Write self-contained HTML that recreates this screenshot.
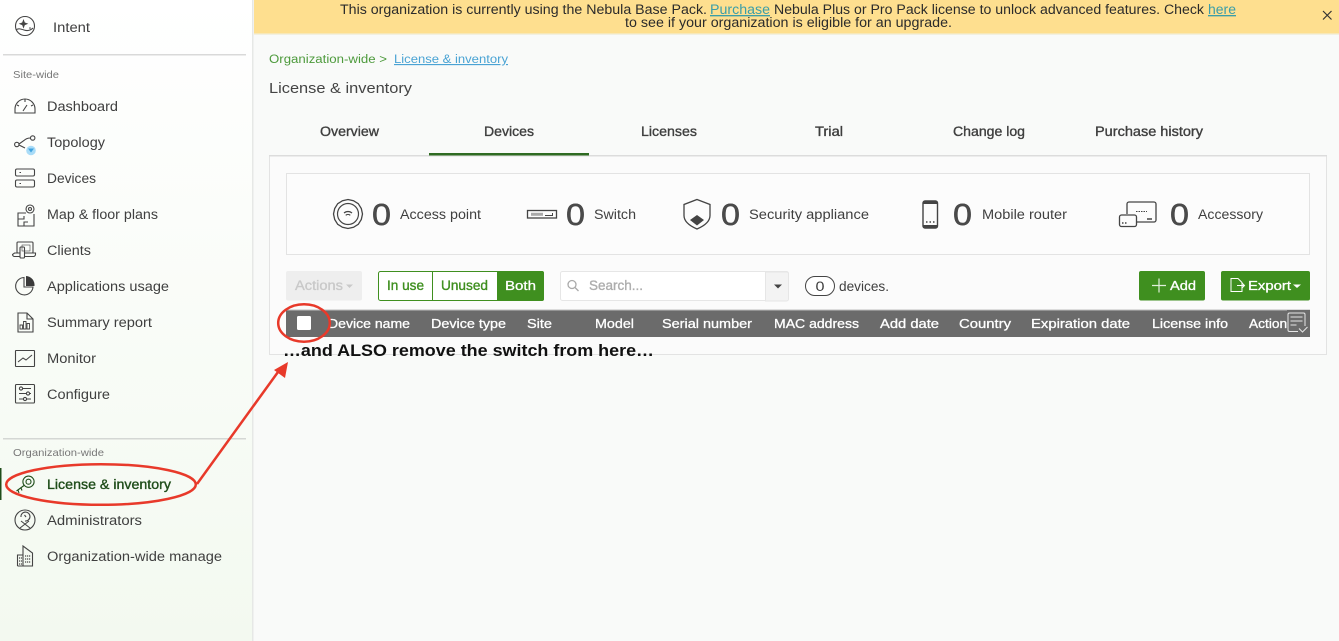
<!DOCTYPE html>
<html><head><meta charset="utf-8"><title>License &amp; inventory</title>
<style>
html,body{margin:0;padding:0;width:1339px;height:641px;overflow:hidden;background:#f9faf9}
svg{display:block}
text{font-family:"Liberation Sans",sans-serif;white-space:pre}
.n{font-size:13.5px;fill:#3f3f3f}
.m{font-size:13.5px;fill:#3f3f3f;stroke:#3f3f3f;stroke-width:.35}
.h{font-size:13px;fill:#fff;stroke:#fff;stroke-width:.3}
.s{font-size:10.5px;fill:#777}
.z{font-size:31px;fill:#4a4a4a;stroke:#4a4a4a;stroke-width:.5}
.i{fill:none;stroke:#444;stroke-width:1.1}
</style></head><body>
<svg width="1339" height="641" viewBox="0 0 1339 641" xmlns="http://www.w3.org/2000/svg">
<defs><linearGradient id="g" x1="0" y1="0" x2="0" y2="1"><stop offset="0" stop-color="#fff"/><stop offset="1" stop-color="#f3f9f0"/></linearGradient></defs>
<rect width="1339" height="641" fill="#f9faf9"/>
<!-- sidebar -->
<rect width="252" height="641" fill="url(#g)"/>
<rect x="252" width="1.5" height="641" fill="#e6e8e6"/>
<rect x="3" y="54" width="243" height="1.5" fill="#d9d9d9"/>
<rect x="3" y="438" width="243" height="1.5" fill="#d4d7d4"/>
<rect y="468" width="1.5" height="32" fill="#1f4d1a"/>
<text class="n" x="53" y="32" textLength="37" lengthAdjust="spacingAndGlyphs">Intent</text>
<text class="s" x="13" y="78" textLength="46" lengthAdjust="spacingAndGlyphs">Site-wide</text>
<text class="n" x="47" y="111" textLength="71" lengthAdjust="spacingAndGlyphs">Dashboard</text>
<text class="n" x="47" y="147" textLength="58" lengthAdjust="spacingAndGlyphs">Topology</text>
<text class="n" x="47" y="183" textLength="49" lengthAdjust="spacingAndGlyphs">Devices</text>
<text class="n" x="47" y="219" textLength="111" lengthAdjust="spacingAndGlyphs">Map &amp; floor plans</text>
<text class="n" x="47" y="255" textLength="44" lengthAdjust="spacingAndGlyphs">Clients</text>
<text class="n" x="47" y="291" textLength="122" lengthAdjust="spacingAndGlyphs">Applications usage</text>
<text class="n" x="47" y="327" textLength="105" lengthAdjust="spacingAndGlyphs">Summary report</text>
<text class="n" x="47" y="363" textLength="49" lengthAdjust="spacingAndGlyphs">Monitor</text>
<text class="n" x="47" y="399" textLength="63" lengthAdjust="spacingAndGlyphs">Configure</text>
<text class="s" x="13" y="456" textLength="91" lengthAdjust="spacingAndGlyphs">Organization-wide</text>
<text class="m" x="47" y="489" textLength="124" lengthAdjust="spacingAndGlyphs" style="fill:#1f4d1a;stroke:#1f4d1a">License &amp; inventory</text>
<text class="n" x="47" y="525" textLength="95" lengthAdjust="spacingAndGlyphs">Administrators</text>
<text class="n" x="47" y="561" textLength="175" lengthAdjust="spacingAndGlyphs">Organization-wide manage</text>
<!-- sidebar icons -->
<g class="i">
<circle cx="25" cy="26" r="9.5"/><path d="M16 30c2-2 5-1 8 0s6 1 9-2"/>
<path d="M15 113v-4a10 10 0 0 1 20 0v4z"/><path d="M25 99v3M17 105l2 1M33 105l-2 1M23 111l4-6"/>
<circle cx="16.800" cy="144.500" r="2.200"/><circle cx="32.700" cy="138" r="2.200"/><path d="M19 144l5-3.500c2-2 4-2.500 6.500-2.500M19 145l6 3"/>
<rect x="15.500" y="169" width="19" height="7" rx="1.500"/><rect x="15.500" y="180" width="19" height="7" rx="1.500"/><path d="M19.500 172.500h1.500M19.500 183.500h1.500"/>
<path d="M26 213h-8v13h16v-12M18 219h6v-3M24 226v-4h4"/><circle cx="30" cy="209" r="4"/><circle cx="30" cy="209" r="1.500"/>
<rect x="17" y="242" width="16" height="11" rx="1"/><path d="M14.500 253h21v1.500c0 1-1 2-2 2h-19c-1 0-2-1-2-2z"/><rect x="20" y="247" width="4.500" height="11" rx="1" fill="#fafbf9"/><rect x="22" y="245" width="8" height="6" stroke-width=".6"/>
<path d="M33 287a8.700 8.700 0 1 1-9-9.500V287z"/>
<path d="M18 313h9l6 6v13H18zM27 313v6h6"/>
<path d="M20 329v-4h2.500v4zM23.500 329v-7.500H26v7.500zM27 329v-5.500h2.500v5.500z" stroke-width=".9"/>
<rect x="15.500" y="350.500" width="19" height="16" rx=".5"/><path d="M18 362l5-4 3 2 6-5"/>
<rect x="15.500" y="384.500" width="19" height="18.500" rx="1"/><path d="M19 388.500h12M19 393.500h12M19 399h12"/>
<circle cx="21" cy="388.500" r="1.600" fill="#fbfcfa"/><circle cx="28" cy="393.500" r="1.600" fill="#fbfcfa"/><circle cx="25" cy="399" r="1.600" fill="#fbfcfa"/>
<g stroke="#1f4d1a"><circle cx="28.500" cy="481.700" r="5.600"/><circle cx="28.500" cy="481.700" r="2.500"/><path d="M24 485.500l-7.500 5.500M18 490l1 3M21 488l1 2.500"/></g>
<circle cx="25" cy="520" r="10"/><path d="M21 517a4.500 4.500 0 1 1 4 4M20 528l9-7M30 528l-9-7M24.500 515l1.500 2"/>
<path d="M23 566v-20l9.500 7v13zM17.500 566v-11H23M17.500 566h15"/><path d="M19 558h3M19 561h3M19 564h3M25 556h6M25 559h6M25 562h6" stroke-width="1.200" stroke-dasharray="1.200 .8"/>
</g>
<path d="M23.500 19l1.300 3.500 3.500 1.300-3.500 1.300-1.300 3.500-1.300-3.500-3.500-1.300 3.500-1.300z" fill="#444"/>
<circle cx="30" cy="28" r=".8" fill="#444"/>
<path d="M26 276v10h8.500a9 9 0 0 0-8.500-10z" fill="#3a3a3a"/>
<circle cx="31" cy="150.500" r="4.800" fill="#a9dcf7"/><path d="M28 148.500h6l-3 4z" fill="#3fa4e0"/>
<!-- banner -->
<rect x="254" width="1085" height="33.500" fill="#fedf8f"/>
<rect x="254" y="33.500" width="1085" height="1.500" fill="#f2f0e0"/>
<text x="340" y="14" font-size="13.500" fill="#2b2b2b" textLength="367" lengthAdjust="spacingAndGlyphs">This organization is currently using the Nebula Base Pack.</text>
<text x="710" y="14" font-size="13.500" fill="#3b9ea8" text-decoration="underline" textLength="60" lengthAdjust="spacingAndGlyphs">Purchase</text>
<text x="774" y="14" font-size="13.500" fill="#2b2b2b" textLength="430" lengthAdjust="spacingAndGlyphs">Nebula Plus or Pro Pack license to unlock advanced features. Check</text>
<text x="1208" y="14" font-size="13.500" fill="#3b9ea8" text-decoration="underline" textLength="28" lengthAdjust="spacingAndGlyphs">here</text>
<text x="625" y="27" font-size="13.500" fill="#2b2b2b" textLength="327" lengthAdjust="spacingAndGlyphs">to see if your organization is eligible for an upgrade.</text>
<path d="M1323 11l8.500 8.500M1331.500 11l-8.500 8.500" stroke="#333" stroke-width="1.200" fill="none"/>
<!-- heading -->
<text x="269" y="63" font-size="11.500" fill="#4d9a3c" textLength="118" lengthAdjust="spacingAndGlyphs">Organization-wide &gt;</text>
<text x="394" y="63" font-size="11.500" fill="#4aa3d4" text-decoration="underline" textLength="114" lengthAdjust="spacingAndGlyphs">License &amp; inventory</text>
<text x="269" y="93" font-size="15px" fill="#444" textLength="143" lengthAdjust="spacingAndGlyphs">License &amp; inventory</text>
<!-- tabs -->
<text class="m" x="320" y="136" textLength="59" lengthAdjust="spacingAndGlyphs">Overview</text>
<text class="m" x="484" y="136" textLength="50" lengthAdjust="spacingAndGlyphs">Devices</text>
<text class="m" x="641" y="136" textLength="56" lengthAdjust="spacingAndGlyphs">Licenses</text>
<text class="m" x="815" y="136" textLength="28" lengthAdjust="spacingAndGlyphs">Trial</text>
<text class="m" x="953" y="136" textLength="72" lengthAdjust="spacingAndGlyphs">Change log</text>
<text class="m" x="1095" y="136" textLength="108" lengthAdjust="spacingAndGlyphs">Purchase history</text>
<!-- panel -->
<rect x="269.500" y="155.500" width="1057" height="199" fill="#fbfbfb" stroke="#e3e3e3"/>
<rect x="269" y="155" width="1058" height="1.500" fill="#dcdcdc"/>
<rect x="429" y="153" width="160" height="2.500" fill="#2f6b22"/>
<rect x="286.500" y="173.500" width="1023" height="81" fill="#fcfcfc" stroke="#e3e3e3"/>
<!-- summary -->
<g class="i">
<path d="M348 199.500l5.500 1.200 4.800 3 3 4.800 1.200 5.500-1.200 5.500-3 4.800-4.800 3-5.500 1.200-5.500-1.200-4.800-3-3-4.800-1.200-5.500 1.200-5.500 3-4.800 4.800-3z" stroke-width="1.300"/>
<circle cx="348" cy="214" r="10.500" stroke-width="1.200"/>
<path d="M344 213a6 6 0 0 1 8 0M345.700 215.300a3.500 3.500 0 0 1 4.600 0" stroke-width="1.200"/>
<rect x="527.500" y="210.500" width="29" height="7.500" stroke-width="1.300"/><path d="M531 214.300h12" stroke-width="3" stroke="#aaa"/><path d="M545 215.500h7M552.500 213v3" stroke-width="1"/>
<path d="M697 199.500l13 5v11c0 6-6 10.500-13 13.500-7-3-13-7.500-13-13.500v-11z" stroke-width="1.300"/>
<rect x="923" y="201" width="14.500" height="27" rx="2" stroke-width="1.400"/>
<path d="M1127 214v-10a2 2 0 0 1 2-2h25a2 2 0 0 1 2 2v16a2 2 0 0 1-2 2h-18" stroke-width="1.300"/>
<rect x="1119.500" y="215" width="17" height="11.500" rx="2" stroke-width="1.300"/>
<path d="M1122 223h1.500M1125 223h1.500" stroke-width="1.500"/>
<path d="M1147 219h5" stroke-width="1.500"/>
<path d="M1136 211.500h11" stroke-width=".9" stroke-dasharray="1.500 1"/>
</g>
<path d="M697 215l7 5-7 5.500-7-5.500z" fill="#444"/>
<rect x="923" y="201" width="14.500" height="3" fill="#444"/><rect x="923" y="225" width="14.500" height="3" fill="#444"/>
<path d="M926 222h1.500M929.500 222h1.500M933 222h1.500" stroke="#444" stroke-width="1.400"/>
<text class="z" x="372" y="225" textLength="19" lengthAdjust="spacingAndGlyphs">0</text>
<text class="z" x="566" y="225" textLength="19" lengthAdjust="spacingAndGlyphs">0</text>
<text class="z" x="721" y="225" textLength="19" lengthAdjust="spacingAndGlyphs">0</text>
<text class="z" x="953" y="225" textLength="19" lengthAdjust="spacingAndGlyphs">0</text>
<text class="z" x="1170" y="225" textLength="19" lengthAdjust="spacingAndGlyphs">0</text>
<text class="n" x="400" y="219" textLength="81" lengthAdjust="spacingAndGlyphs">Access point</text>
<text class="n" x="594" y="219" textLength="42" lengthAdjust="spacingAndGlyphs">Switch</text>
<text class="n" x="749" y="219" textLength="120" lengthAdjust="spacingAndGlyphs">Security appliance</text>
<text class="n" x="982" y="219" textLength="85" lengthAdjust="spacingAndGlyphs">Mobile router</text>
<text class="n" x="1198" y="219" textLength="65" lengthAdjust="spacingAndGlyphs">Accessory</text>
<!-- toolbar -->
<rect x="286" y="271" width="76" height="29.500" rx="2" fill="#eeeeee"/>
<text class="m" x="295" y="290" textLength="48" lengthAdjust="spacingAndGlyphs" style="fill:#c9c9c9;stroke:#c9c9c9">Actions</text>
<path d="M346 284.500h7l-3.500 3.500z" fill="#c9c9c9"/>
<rect x="378.500" y="271.500" width="165" height="29" rx="2" fill="#fff" stroke="#3f8f1f"/>
<path d="M432.500 272v28" stroke="#3f8f1f"/>
<path d="M497 271h45a2 2 0 0 1 2 2v26a2 2 0 0 1-2 2h-45z" fill="#3f8f1f"/>
<text class="m" x="387" y="290" textLength="37" lengthAdjust="spacingAndGlyphs" style="fill:#3f8f1f;stroke:#3f8f1f">In use</text>
<text class="m" x="441" y="290" textLength="47" lengthAdjust="spacingAndGlyphs" style="fill:#3f8f1f;stroke:#3f8f1f">Unused</text>
<text class="h" x="505" y="290" textLength="31" lengthAdjust="spacingAndGlyphs" font-size="13.500">Both</text>
<rect x="560.500" y="271.500" width="228" height="29" rx="2" fill="#fff" stroke="#e6e6e6"/>
<path d="M765.500 272h21a2 2 0 0 1 2 2v25a2 2 0 0 1-2 2h-21z" fill="#f3f3f3" stroke="#e6e6e6"/>
<path d="M774 284.500h8l-4 4z" fill="#444"/>
<circle cx="572" cy="284.500" r="4" fill="none" stroke="#aaa" stroke-width="1.300"/><path d="M575 287.500l3.500 3.500" stroke="#aaa" stroke-width="1.300"/>
<text class="m" x="589" y="290" textLength="54" lengthAdjust="spacingAndGlyphs" style="fill:#adadad;stroke:#adadad">Search...</text>
<rect x="805.500" y="276.500" width="29" height="19" rx="9.500" fill="#fff" stroke="#444"/>
<text class="n" x="815.500" y="291" textLength="9" lengthAdjust="spacingAndGlyphs">0</text>
<text class="n" x="839" y="291" textLength="50" lengthAdjust="spacingAndGlyphs">devices.</text>
<rect x="1139" y="271" width="66" height="29.500" rx="2" fill="#3f8f1f"/>
<path d="M1152 285.500h14M1159 278.500v14" stroke="#dfeeda" stroke-width="1.200"/>
<text class="h" x="1170" y="290" textLength="26" lengthAdjust="spacingAndGlyphs" font-size="13.500">Add</text>
<rect x="1221" y="271" width="89" height="29.500" rx="2" fill="#3f8f1f"/>
<path d="M1231 291.500v-13h7l4 4v9zM1237 285.500h7M1242 283l2.500 2.500-2.500 2.500" stroke="#fff" fill="none" stroke-width="1"/>
<text class="h" x="1248" y="290" textLength="43" lengthAdjust="spacingAndGlyphs" font-size="13.500">Export</text>
<path d="M1293 284.500h8l-4 3.500z" fill="#fff"/>
<!-- table head -->
<rect x="286" y="310" width="1024" height="27" fill="#6b6b6b"/>
<rect x="286" y="309.500" width="1024" height="1" fill="#bdbdbd"/>
<rect x="297" y="316" width="14" height="14" rx="1.500" fill="#fff"/>
<text class="h" x="328" y="328" textLength="82" lengthAdjust="spacingAndGlyphs">Device name</text>
<text class="h" x="431" y="328" textLength="75" lengthAdjust="spacingAndGlyphs">Device type</text>
<text class="h" x="527" y="328" textLength="25" lengthAdjust="spacingAndGlyphs">Site</text>
<text class="h" x="595" y="328" textLength="39" lengthAdjust="spacingAndGlyphs">Model</text>
<text class="h" x="662" y="328" textLength="90" lengthAdjust="spacingAndGlyphs">Serial number</text>
<text class="h" x="774" y="328" textLength="85" lengthAdjust="spacingAndGlyphs">MAC address</text>
<text class="h" x="880" y="328" textLength="59" lengthAdjust="spacingAndGlyphs">Add date</text>
<text class="h" x="959" y="328" textLength="52" lengthAdjust="spacingAndGlyphs">Country</text>
<text class="h" x="1031" y="328" textLength="99" lengthAdjust="spacingAndGlyphs">Expiration date</text>
<text class="h" x="1152" y="328" textLength="76" lengthAdjust="spacingAndGlyphs">License info</text>
<text class="h" x="1249" y="328" textLength="45" lengthAdjust="spacingAndGlyphs">Actions</text>
<rect x="1287" y="310" width="23" height="27" fill="#6b6b6b"/>
<path d="M1298 331.500h-8.500a1.500 1.500 0 0 1-1.500-1.500v-15.500a1.500 1.500 0 0 1 1.500-1.500h14a1.500 1.500 0 0 1 1.500 1.500v11.500M1290.500 317h12M1290.500 321h12M1290.500 325h6M1299 328.500l3.500 3.500 5-5" fill="none" stroke="#e6e6e6" stroke-width="1"/>
<!-- annotation -->
<text x="283" y="356" font-size="16.500" font-weight="700" fill="#111" textLength="371" lengthAdjust="spacingAndGlyphs">…and ALSO remove the switch from here…</text>
<g fill="none" stroke="#e8392a" stroke-width="2.500">
<ellipse cx="304" cy="323" rx="25.800" ry="18.700"/>
<ellipse cx="101" cy="484.500" rx="94.800" ry="20.300"/>
<path d="M197 484l81-112"/>
</g>
<path d="M288 362l-14 8 11 8z" fill="#e8392a"/>
</svg>
</body></html>
